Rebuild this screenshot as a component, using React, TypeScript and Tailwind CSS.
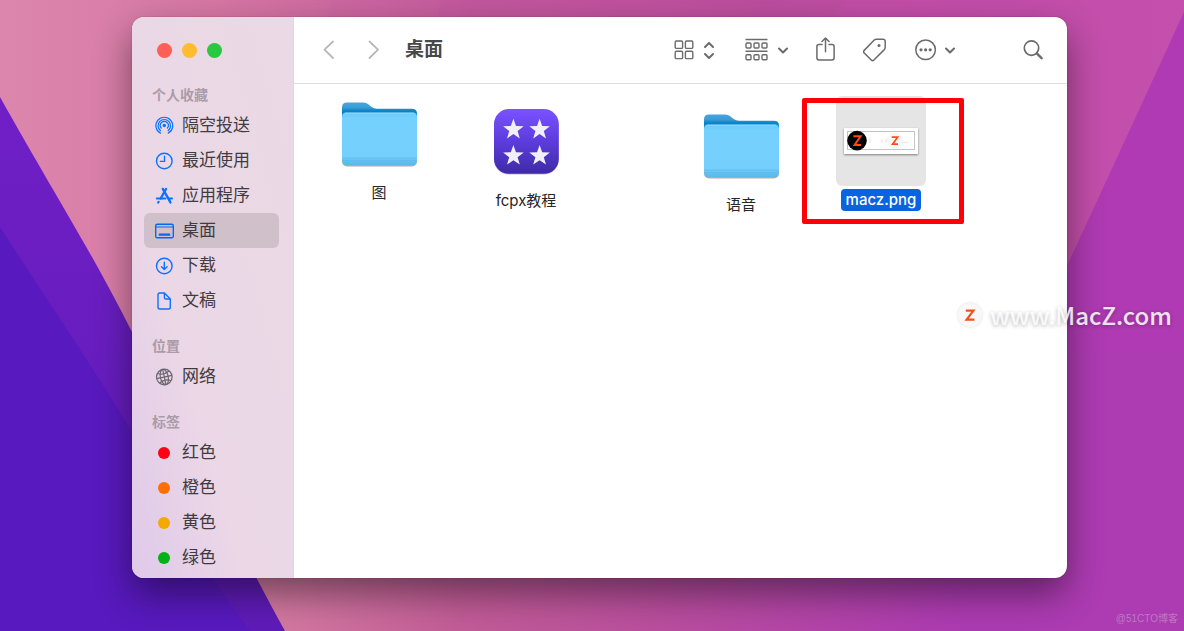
import type { ReactNode } from "react";

const favorites = [
  { name: "隔空投送", icon: <AirdropIcon /> },
  { name: "最近使用", icon: <ClockIcon /> },
  { name: "应用程序", icon: <AppsIcon /> },
  { name: "桌面", icon: <DesktopIcon />, active: true },
  { name: "下载", icon: <DownloadIcon /> },
  { name: "文稿", icon: <DocumentIcon /> },
];

const tags = [
  { name: "红色", color: "bg-[#ff0015]" },
  { name: "橙色", color: "bg-[#ff6f00]" },
  { name: "黄色", color: "bg-[#f5a800]" },
  { name: "绿色", color: "bg-[#00b212]" },
];

function AirdropIcon() {
  return (
    <svg viewBox="0 0 20 20" className="size-5" fill="none" stroke="#0a72ff" strokeWidth="1.2" strokeLinecap="round">
      <path d="M6.4 17.1A8.4 8.4 0 1 1 14.2 17.1" />
      <path d="M6.4 14.5A6.2 6.2 0 1 1 14.2 14.5" />
      <path d="M7.2 12A4 4 0 1 1 13.4 12" />
      <circle cx="10.3" cy="9.5" r="1.7" fill="#0a72ff" stroke="none" />
    </svg>
  );
}

function ClockIcon() {
  return (
    <svg viewBox="0 0 20 20" className="size-5" fill="none" stroke="#0a72ff" strokeWidth="1.4" strokeLinecap="round" strokeLinejoin="round">
      <circle cx="10.3" cy="10" r="7.8" />
      <path d="M10.5 5.2V10.4H6.4" />
    </svg>
  );
}

function AppsIcon() {
  return (
    <svg viewBox="0 0 20 20" className="size-5" fill="none" stroke="#0a72ff" strokeLinecap="round">
      <path d="M8.8 2.9L15.9 15.4" strokeWidth="2.4" />
      <path d="M12.1 2.9L6.6 12.6M4.6 15.8L4.2 16.5" strokeWidth="2.2" />
      <path d="M2.8 12.6H11.4M15 12.6H18" strokeWidth="2" />
      <path d="M15.9 15.4L16.6 16.7" strokeWidth="2" />
    </svg>
  );
}

function DesktopIcon() {
  return (
    <svg viewBox="0 0 20 20" className="size-5" fill="none" stroke="#0a66f0" strokeWidth="1.4">
      <rect x="1.7" y="3.2" width="17.6" height="13.6" rx="1.6" />
      <path d="M2 6H19" strokeWidth="1.2" />
      <path d="M4.8 13.6H16.2" strokeWidth="2.4" />
    </svg>
  );
}

function DownloadIcon() {
  return (
    <svg viewBox="0 0 20 20" className="size-5" fill="none" stroke="#0a72ff" strokeWidth="1.4" strokeLinecap="round" strokeLinejoin="round">
      <circle cx="10.3" cy="10" r="7.8" />
      <path d="M10.3 6.2V13.4M7.5 10.8L10.3 13.6L13.1 10.8" />
    </svg>
  );
}

function DocumentIcon() {
  return (
    <svg viewBox="0 0 20 20" className="size-5" fill="none" stroke="#0a72ff" strokeWidth="1.4" strokeLinejoin="round">
      <path d="M5.2 2H10.4L16.3 8V16.2Q16.3 18 14.5 18H5.8Q4 18 4 16.2V3.6Q4 2 5.8 2Z" />
      <path d="M10.4 2V6.4Q10.4 8 12 8H16.3" />
    </svg>
  );
}

function NetworkIcon() {
  return (
    <svg viewBox="0 0 20 20" className="size-5" fill="none" stroke="#6d6670" strokeWidth="1.2">
      <circle cx="10.3" cy="10" r="7.8" />
      <g transform="rotate(-12 10.3 10)">
        <ellipse cx="10.3" cy="10" rx="3.9" ry="7.8" />
        <path d="M10.3 2.2V17.8M2.5 10H18.1M4.4 5.2Q10.3 8.4 16.2 5.2M4.4 14.8Q10.3 11.6 16.2 14.8" />
      </g>
    </svg>
  );
}

function ChevronDown() {
  return (
    <svg viewBox="0 0 10 20" className="h-5 w-[10px]" fill="none" stroke="#6b6b6b" strokeWidth="2" strokeLinecap="round" strokeLinejoin="round">
      <path d="M1 8.5L5 12.5L9 8.5" />
    </svg>
  );
}

function FolderIcon() {
  return (
    <svg viewBox="0 0 76 66" className="h-[66px] w-[76px]">
      <defs>
        <linearGradient id="folderBack" x1="0" y1="0" x2="0" y2="1">
          <stop offset="0" stopColor="#47a5dc" />
          <stop offset="0.3" stopColor="#3a9cd6" />
          <stop offset="0.5" stopColor="#0b82c8" />
        </linearGradient>
        <linearGradient id="folderFront" x1="0" y1="0" x2="0" y2="1">
          <stop offset="0" stopColor="#6ccbfa" />
          <stop offset="0.1" stopColor="#74d0fc" />
          <stop offset="0.84" stopColor="#74cffc" />
          <stop offset="0.9" stopColor="#69c5f3" />
          <stop offset="1" stopColor="#58b8ea" />
        </linearGradient>
      </defs>
      <rect x="1" y="14" width="75" height="51.4" rx="5" fill="#b3aaa4" />
      <path d="M1 18V6.6Q1 1.6 6 1.6H22Q25.4 1.6 27.6 3.4L30.6 6Q33 7.8 36 7.8H71Q76 7.8 76 12.6V18Z" fill="url(#folderBack)" />
      <path d="M1 16Q1 11.6 5.4 11.6H71.6Q76 11.6 76 16V59Q76 64 71 64H6Q1 64 1 59Z" fill="url(#folderFront)" />
      <path d="M4 12.2H73" stroke="#a4e1ff" strokeWidth="0.7" />
      <path d="M1.4 57.2H75.6M1.4 59.8H75.6" stroke="#58b2e0" strokeWidth="0.5" />
    </svg>
  );
}

function StarsIcon() {
  const star =
    "M0 -10.8L2.6 -3.6L10.3 -3.4L4.2 1.4L6.4 8.8L0 4.5L-6.4 8.8L-4.2 1.4L-10.3 -3.4L-2.6 -3.6Z";
  return (
    <svg viewBox="0 0 68 68" className="size-[68px]">
      <defs>
        <linearGradient id="starsBg" x1="0" y1="0" x2="0" y2="1">
          <stop offset="0" stopColor="#7a52ff" />
          <stop offset="0.5" stopColor="#5c3cdc" />
          <stop offset="1" stopColor="#402aa6" />
        </linearGradient>
      </defs>
      <rect x="2" y="2.6" width="64.8" height="64" rx="15" fill="#c4bcd8" />
      <rect x="2" y="1" width="64.8" height="64.8" rx="15" fill="url(#starsBg)" />
      <g fill="#f1effa">
        <path d={star} transform="translate(21.4 21.6)" />
        <path d={star} transform="translate(47.6 21.6)" />
        <path d={star} transform="translate(21.4 47.8)" />
        <path d={star} transform="translate(47.6 47.8)" />
      </g>
    </svg>
  );
}

function ImagePreview() {
  return (
    <div className="flex size-[90px] items-center justify-center rounded-md bg-[#e5e5e5]">
      <svg viewBox="0 0 74 26" className="h-[26px] w-[74px] bg-white shadow-[0_1px_2px_rgba(0,0,0,0.45)]">
        <rect x="3.5" y="3.5" width="67" height="18" fill="#fff" stroke="#c4c4c4" />
        <circle cx="13" cy="12.6" r="9.8" fill="#000" />
        <path d="M9.4 8.2H16.6L10.6 17H17" fill="none" stroke="#ff4a14" strokeWidth="2" />
        <circle cx="51" cy="12.6" r="8" fill="#f8f6f6" />
        <path d="M47.8 9.2H53.6L48.6 16.2H54" fill="none" stroke="#ff4a14" strokeWidth="1.7" />
        <path d="M26 9.5V15M38 11V15M42 11V15M58 14.5H64" stroke="#ecebeb" strokeWidth="1.4" />
      </svg>
    </div>
  );
}

function Wallpaper() {
  return (
    <svg viewBox="0 0 1184 631" preserveAspectRatio="none" className="absolute inset-0 size-full">
      <defs>
        <linearGradient id="sky" gradientUnits="userSpaceOnUse" x1="0" y1="0" x2="1184" y2="0">
          <stop offset="0" stopColor="#dc86ad" />
          <stop offset="0.18" stopColor="#d677a4" />
          <stop offset="0.4" stopColor="#c55c9d" />
          <stop offset="0.65" stopColor="#bf509f" />
          <stop offset="1" stopColor="#c552ac" />
        </linearGradient>
        <linearGradient id="ground" gradientUnits="userSpaceOnUse" x1="250" y1="0" x2="960" y2="0">
          <stop offset="0" stopColor="#d67da2" />
          <stop offset="0.3" stopColor="#c25c97" />
          <stop offset="0.6" stopColor="#b94d9f" />
          <stop offset="1" stopColor="#ad3bb2" />
        </linearGradient>
        <linearGradient id="violet" gradientUnits="userSpaceOnUse" x1="0" y1="97" x2="0" y2="631">
          <stop offset="0" stopColor="#701fc6" />
          <stop offset="1" stopColor="#5f1bb8" />
        </linearGradient>
      </defs>
      <rect width="1184" height="631" fill="url(#sky)" />
      <path d="M330 0H1184V330H270Z" fill="#b83ca8" opacity="0.06" />
      <path d="M441 0H1184V330H380Z" fill="#b83ca8" opacity="0.08" />
      <path d="M843 0H1184V330H700Z" fill="#c94fb4" opacity="0.3" />
      <rect y="330" width="1184" height="301" fill="url(#ground)" />
      <path d="M1184 12Q1130 130 1066 268L1040 330V360H1184Z" fill="#af3ab3" />
      <path d="M1040 350H1184V631H960Z" fill="#ad3bb2" />
      <path d="M0 97C52 190 92 252 132 332C182 430 240 550 285 631H0Z" fill="url(#violet)" />
      <path d="M0 227C50 305 92 365 132 432C162 484 190 535 212 578L250 631H0Z" fill="#5819be" />
    </svg>
  );
}

function SectionTitle({ children }: { children: ReactNode }) {
  return (
    <h2 className="h-[25px] pl-5 text-[14px] leading-6 font-bold text-[#ab9ba8]">
      {children}
    </h2>
  );
}

function SidebarItem({ name, icon, active }: { name: string; icon: ReactNode; active?: boolean }) {
  return (
    <li className="mr-[14px] ml-3">
      <button
        type="button"
        className={`flex h-[35px] w-full items-center gap-2 rounded-md px-[10px] text-[17px] text-[#413b41] ${
          active ? "bg-[#cfc0ca]" : ""
        }`}
      >
        <span className="flex size-5 items-center justify-center">{icon}</span>
        {name}
      </button>
    </li>
  );
}

function Sidebar() {
  return (
    <aside className="w-[162px] shrink-0 border-r border-[#e4d5e0] bg-linear-to-tr from-[#dfc9ea] via-[#ebd7e6] via-35% to-[#eadae5] pb-[3px]">
      <div className="flex h-[66px] items-center gap-[10px] pl-[25px]">
        <button type="button" aria-label="关闭" className="size-[15px] rounded-full bg-[#ff5f57]" />
        <button type="button" aria-label="最小化" className="size-[15px] rounded-full bg-[#febc2e]" />
        <button type="button" aria-label="缩放" className="size-[15px] rounded-full bg-[#28c840]" />
      </div>
      <nav className="flex flex-col gap-4">
        <section>
          <SectionTitle>个人收藏</SectionTitle>
          <ul>
            {favorites.map((item) => (
              <SidebarItem key={item.name} {...item} />
            ))}
          </ul>
        </section>
        <section>
          <SectionTitle>位置</SectionTitle>
          <ul>
            <SidebarItem name="网络" icon={<NetworkIcon />} />
          </ul>
        </section>
        <section>
          <SectionTitle>标签</SectionTitle>
          <ul>
            {tags.map((tag) => (
              <SidebarItem
                key={tag.name}
                name={tag.name}
                icon={<span className={`size-3 rounded-full ${tag.color}`} />}
              />
            ))}
          </ul>
        </section>
      </nav>
    </aside>
  );
}

function Toolbar() {
  return (
    <header className="flex h-[67px] items-center border-b border-[#dedede] pr-6 pl-[29px]">
      <button type="button" aria-label="后退">
        <svg viewBox="0 0 12 20" className="h-5 w-3" fill="none" stroke="#b8b8b8" strokeWidth="1.8" strokeLinecap="round" strokeLinejoin="round">
          <path d="M10 1.5L1.5 9.7L10 18" />
        </svg>
      </button>
      <button type="button" aria-label="前进" className="ml-8">
        <svg viewBox="0 0 12 20" className="h-5 w-3" fill="none" stroke="#b8b8b8" strokeWidth="1.8" strokeLinecap="round" strokeLinejoin="round">
          <path d="M2.5 1.5L11 9.7L2.5 18" />
        </svg>
      </button>
      <h1 className="ml-[26px] text-[19px] font-bold text-[#484848]">桌面</h1>

      <div className="ml-auto flex items-center gap-7">
        <button type="button" aria-label="图标视图" className="mr-[3px] flex items-center gap-[10px]">
          <svg viewBox="0 0 20 20" className="size-5" fill="none" stroke="#6b6b6b" strokeWidth="1.4">
            <rect x="1.2" y="1" width="7.4" height="7.4" rx="1.2" />
            <rect x="11.4" y="1" width="7.4" height="7.4" rx="1.2" />
            <rect x="1.2" y="11.2" width="7.4" height="7.4" rx="1.2" />
            <rect x="11.4" y="11.2" width="7.4" height="7.4" rx="1.2" />
          </svg>
          <svg viewBox="0 0 10 20" className="h-5 w-[10px]" fill="none" stroke="#6b6b6b" strokeWidth="2" strokeLinecap="round" strokeLinejoin="round">
            <path d="M1 7L5 3L9 7M1 14L5 18L9 14" />
          </svg>
        </button>
        <button type="button" aria-label="群组" className="flex items-center gap-[10px]">
          <svg viewBox="0 0 23 24" className="h-6 w-[23px]" fill="none" stroke="#6b6b6b" strokeWidth="1.4">
            <path d="M0.5 1.5H22.5M0.5 13.2H22.5" />
            <rect x="1" y="5" width="5" height="5" rx="1" />
            <rect x="9" y="5" width="5" height="5" rx="1" />
            <rect x="17" y="5" width="5" height="5" rx="1" />
            <rect x="1" y="16.8" width="5" height="5" rx="1" />
            <rect x="9" y="16.8" width="5" height="5" rx="1" />
            <rect x="17" y="16.8" width="5" height="5" rx="1" />
          </svg>
          <ChevronDown />
        </button>
        <button type="button" aria-label="共享">
          <svg viewBox="0 0 19 26" className="h-[26px] w-[19px]" fill="none" stroke="#6b6b6b" strokeWidth="1.5" strokeLinecap="round" strokeLinejoin="round">
            <path d="M6 7.4H3Q0.9 7.4 0.9 9.5V20.8Q0.9 22.9 3 22.9H16Q18.1 22.9 18.1 20.8V9.5Q18.1 7.4 16 7.4H13" />
            <path d="M9.5 14.8V1.2M6 4.5L9.5 1L13 4.5" />
          </svg>
        </button>
        <button type="button" aria-label="标签">
          <svg viewBox="1 0 24 24" className="size-6" fill="none" stroke="#6b6b6b" strokeWidth="1.5" strokeLinejoin="round">
            <path d="M14.4 1.3H21Q23.2 1.3 23.2 3.5V9.3Q23.2 10.6 22.3 11.6L11.9 22Q10.6 23.3 9.3 22L2.2 15Q0.9 13.7 2.2 12.4L12 2.3Q13 1.3 14.4 1.3Z" />
            <circle cx="17" cy="7.4" r="1.5" fill="#6b6b6b" stroke="none" />
          </svg>
        </button>
        <button type="button" aria-label="更多操作" className="flex items-center gap-2">
          <svg viewBox="0 0 22 22" className="size-[22px]" fill="none" stroke="#6b6b6b" strokeWidth="1.5">
            <circle cx="10.6" cy="10.8" r="9.8" />
            <g fill="#6b6b6b" stroke="none">
              <circle cx="6" cy="10.8" r="1.6" />
              <circle cx="10.6" cy="10.8" r="1.6" />
              <circle cx="15.2" cy="10.8" r="1.6" />
            </g>
          </svg>
          <ChevronDown />
        </button>
        <button type="button" aria-label="搜索" className="ml-10">
          <svg viewBox="0 0 20 20" className="size-5" fill="none" stroke="#6b6b6b" strokeLinecap="round">
            <circle cx="8.5" cy="8.1" r="7.2" strokeWidth="1.7" />
            <path d="M14 13.6L18.6 18.2" strokeWidth="2.4" />
          </svg>
        </button>
      </div>
    </header>
  );
}

function FileItem({ name, className, children }: { name: string; className: string; children: ReactNode }) {
  return (
    <li className={`w-[90px] shrink-0 text-center ${className}`}>
      <div className="flex size-[90px] items-center justify-center">{children}</div>
      <span className="mt-[3px] inline-block text-[15px] leading-[22px] text-[#262626]">{name}</span>
    </li>
  );
}

export default function App() {
  return (
    <main className="relative min-h-screen overflow-hidden pt-[17px] pr-[117px] pb-[53px] pl-[132px] font-['Inter','Noto_Sans_CJK_SC',sans-serif]">
      <Wallpaper />

      <div className="relative flex overflow-hidden rounded-xl bg-white shadow-[0_0_1px_rgba(0,0,0,0.6),0_16px_36px_rgba(0,0,0,0.45)]">
        <Sidebar />
        <div className="min-w-0 flex-1">
          <Toolbar />
          <ul className="flex items-start pl-10">
            <FileItem name="图" className="mt-[5px]">
              <FolderIcon />
            </FileItem>
            <FileItem name="fcpx教程" className="mt-[13px] ml-[57px]">
              <StarsIcon />
            </FileItem>
            <FileItem name="语音" className="mt-[17px] ml-[125px]">
              <FolderIcon />
            </FileItem>
            <li className="relative mt-3 ml-[50px] w-[90px] shrink-0 text-center">
              <ImagePreview />
              <span className="mt-[3px] inline-block rounded bg-[#0a63e0] px-[5px] text-[15px] leading-[22px] font-medium text-white">
                macz.png
              </span>
              {/* highlight frame */}
              <div className="absolute top-[2px] -right-[38px] -left-[34px] h-[126px] rounded-xs border-5 border-[#ff0008]" />
            </li>
          </ul>
        </div>
      </div>

      {/* watermarks */}
      <div className="absolute top-[297px] right-3 flex items-center gap-2">
        <svg viewBox="0 0 24 24" className="size-6 rounded-full bg-[#f8f8f8] shadow-[0_0_3px_rgba(0,0,0,0.15)]">
          <path d="M7.8 7.6H15.4L8.6 16.6H16.4" fill="none" stroke="#f4511e" strokeWidth="2.2" />
        </svg>
        <span className="font-['Noto_Sans_CJK_SC',sans-serif] text-[24px] leading-9 font-medium text-white/85 [text-shadow:0_1px_4px_rgba(0,0,0,0.3)]">
          www.MacZ.com
        </span>
      </div>
      <span className="absolute right-[6px] bottom-1 font-['Liberation_Sans','Noto_Sans_CJK_SC',sans-serif] text-[10px] leading-4 text-[#c9a3cf]/60">
        @51CTO博客
      </span>
    </main>
  );
}
